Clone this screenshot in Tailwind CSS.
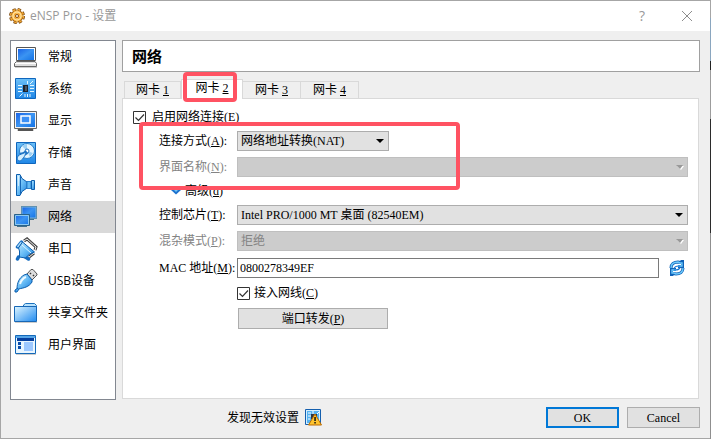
<!DOCTYPE html>
<html lang="zh-CN">
<head>
<meta charset="utf-8">
<title>eNSP Pro - 设置</title>
<script src="https://cdn.jsdelivr.net/npm/@tailwindcss/browser@4"></script>
</head>
<body class="h-screen flex overflow-hidden bg-[#efefef] text-xs text-black font-['Liberation_Serif','Noto_Sans_CJK_SC',serif]">
<svg class="absolute size-0" aria-hidden="true">
  <defs>
    <linearGradient id="blue" x1="0" y1="0" x2="1" y2="1"><stop offset="0" stop-color="#1a63e6"/><stop offset=".5" stop-color="#3b94f2"/><stop offset="1" stop-color="#1473e6"/></linearGradient>
    <linearGradient id="sky" x1="0" y1="0" x2="1" y2="1"><stop offset="0" stop-color="#c5ebff"/><stop offset=".5" stop-color="#69bdf6"/><stop offset="1" stop-color="#1c80dc"/></linearGradient>
    <linearGradient id="chip-bg" x1="0" y1="0" x2="0" y2="1"><stop offset="0" stop-color="#6cc0f8"/><stop offset="1" stop-color="#1f86e6"/></linearGradient>
    <linearGradient id="folder" x1="0" y1="0" x2="1" y2="1"><stop offset="0" stop-color="#dff6ff"/><stop offset="1" stop-color="#1f8af0"/></linearGradient>
  </defs>
</svg>
<div class="flex-1 min-w-0 flex flex-col border-l border-t border-b border-[#a6a6a6]">
  <header class="h-[30px] shrink-0 bg-white flex items-center pl-2 text-[#999] font-['Open_Sans','Noto_Sans_CJK_SC',sans-serif]">
    <svg class="size-4" viewBox="0 0 16 16"><circle cx="8" cy="8" r="6.500" fill="none" stroke="#7a4a12" stroke-width="3" stroke-dasharray="3.100 2"/><circle cx="8" cy="8" r="6" fill="#f3a632" stroke="#8a5314"/><circle cx="8" cy="8" r="6.500" fill="none" stroke="#f0a634" stroke-width="1.500" stroke-dasharray="2.600 2.500"/><circle cx="8" cy="8" r="4" fill="none" stroke="#ffe3a0" stroke-width="1.500"/><path d="M8 2v4m6 2h-4m-2 6v-4M2 8h4" stroke="#ffd27a"/><circle cx="8" cy="8" r="1.500" fill="#fff" stroke="#8a4c0c"/></svg>
    <h1 class="ml-[5px] text-xs flex-1">eNSP Pro - 设置</h1>
    <button aria-label="帮助" class="w-5 text-sm">?</button>
    <button aria-label="关闭" class="ml-[29px] mr-[17px]"><svg class="size-3" viewBox="0 0 12 12"><path d="m1 1 10 10M11 1 1 11" stroke="#8d8d8d"/></svg></button>
  </header>
  <div class="flex-1 min-h-0 flex flex-col pl-[9px] pr-2.5 pt-[9px] pb-2.5">
    <div class="flex-1 min-h-0 flex gap-1.5">
      <nav class="w-[106px] shrink-0 bg-white border border-[#828790] font-['Open_Sans','Noto_Sans_CJK_SC',sans-serif] [&_a]:flex [&_a]:items-center [&_a]:h-8 [&_a]:pl-[3px] [&_a]:gap-2.5 [&_svg]:size-6">
        <a href="#general"><svg viewBox="0 0 24 24"><path d="M2.500 2.500h19v13h-19Z" fill="#fff" stroke="#555"/><path d="M4 4h16v11H4Z" fill="url(#blue)"/><path d="M2.500 16.500h18.500l1.500 2v3H.500v-3Z" fill="#ddd" stroke="#666"/><path d="M1 18.500h21" stroke="#fff"/><path d="M1 22.500h22" stroke="#ccc"/></svg>常规</a>
        <a href="#system"><svg viewBox="0 0 24 24"><path d="M1.500 1.500h20v20h-20Z" fill="url(#chip-bg)" stroke="#0f66bd"/><path d="M4 8.500h4m-4 3h4m-4 3h4m8-6h4m-4 3h4m-4 3h4M13.500 4v3M5.500 19.500l3-3m2.500.5v3m2.500-3v3m2.500-3v3m0-13 3-3" stroke="#e6f8ff" fill="none"/><path d="M9 8h5v7H9Z" fill="#1c2430"/><path d="M11 9h2v5h-2Z" fill="#4b5563"/></svg>系统</a>
        <a href="#display"><svg viewBox="0 0 24 24"><path d="M.5 2.500h22v17H.500Z" fill="#f4f4f4" stroke="#666"/><path d="M2 4h19v14H2Z" fill="url(#blue)"/><path d="M7 7h9v7H7Z" fill="#3b8ff5" stroke="#fff" stroke-width="1.500"/><path d="M4 20.500h15v1H4Z" fill="#ddd" stroke="#555"/></svg>显示</a>
        <a href="#storage"><svg viewBox="0 0 24 24"><path d="M2.500 1.500h19v21h-19Z" fill="url(#chip-bg)" stroke="#0f66bd"/><circle cx="13" cy="10" r="7.500" fill="#e4f5ff" stroke="#2a81cd"/><path d="M13 10 8 5a7 7 0 0 1 5-2Zm0 0 3 6 3-4Z" fill="#9bd0f5"/><circle cx="13" cy="10" r="2" fill="#fff" stroke="#1e73c4"/><path d="m6 14 4-1 3-2" fill="none" stroke="#1e73c4" stroke-width="4"/><path d="M4 15c2-2 5-2 8-4-1 5-4 8-6 9-3 0-3-3-2-5Z" fill="#d3eeff" stroke="#1e73c4"/></svg>存储</a>
        <a href="#audio"><svg viewBox="0 0 24 24"><path d="M2.500 1.500H6l2 4 5 3.500v6l-5 3.500-2 4H2.500Z" fill="url(#sky)" stroke="#0d5fae"/><path d="M6.500 3v18" stroke="#1566b5"/><path d="M4.500 3v10" stroke="#fff" opacity=".6"/><path d="M13 8.500h4v7h-4Z" fill="#67bbf3" stroke="#2a81cd"/><path d="M17.500 7.500h3v9h-3Z" fill="url(#sky)" stroke="#0d5fae"/></svg>声音</a>
        <a href="#network" class="bg-[#d9d9d9]" aria-current="page"><svg viewBox="0 0 24 24"><path d="M7.500 1.500h15v12h-15Z" fill="#e8f3fa" stroke="#41718f"/><path d="M8 2h14v11H8Z" fill="url(#blue)" stroke="#7fb4d8"/><path d="M11 14.500h9" stroke="#41718f"/><path d="M.500 9.500h15v11H.500Z" fill="url(#blue)" stroke="#2a6288"/><path d="M1.500 10.500h13v9h-13Z" fill="none" stroke="#8cc9f2"/><path d="M3 21.500h10" stroke="#41718f"/></svg>网络</a>
        <a href="#serial"><svg viewBox="0 0 24 24"><path d="m10 4 3-2 9 8-1 3M15 20l5-4" fill="none" stroke="#444" stroke-width="3"/><path d="m10 4 3-2 9 8-1 3M15 20l5-4" fill="none" stroke="#eee" stroke-width="1"/><path d="m3.500 10 4-5m-3 15-1 2m8-2 3 2" stroke="#176cc0" stroke-width="3.500" stroke-linecap="round"/><path d="m3.500 10 4-5" stroke="#a9dcfb" stroke-width="1.500"/><path d="m8.500 5 12 10-5 2-4 4-6-1v-6l-1-3Z" fill="url(#sky)" stroke="#0d5fae"/><path d="m8 8 9 8" stroke="#def5ff"/></svg>串口</a>
        <a href="#usb"><svg viewBox="0 0 24 24"><path d="m13 5 4-4.500h2L23 5v1l-5 5Z" fill="#ddd" stroke="#555"/><path d="m16 4 1 1m2 1 1 1" stroke="#333" stroke-width="1.500"/><path d="M3 20c0-6 2-11 7-14l3-1 5 6v2c-3 5-8 6-14 7Z" fill="url(#sky)" stroke="#0d5fae"/><path d="m4 19-3 2v2h2l2-3" fill="#4ba7ee" stroke="#0d5fae"/><path d="M6 15c1-3 3-6 6-7" fill="none" stroke="#effaff" stroke-width="2"/></svg>USB设备</a>
        <a href="#shared"><svg viewBox="0 0 24 24"><path d="M9.500 5.500V4l2-1.500h9l2 2v15" fill="#b8e2fc" stroke="#1c72be"/><path d="M.500 5.500h22v15H.500Z" fill="url(#folder)" stroke="#1767b6"/><path d="M1 21.500h22" stroke="#ccc"/></svg>共享文件夹</a>
        <a href="#ui"><svg viewBox="0 0 24 24"><path d="M1.500 2.500h20v18h-20Z" fill="#e9f6ff" stroke="#1469b9"/><path d="M2 3h19v2H2Z" fill="#55a5e8"/><path d="M3 5h17v3H3Z" fill="#063f9e"/><path d="M4 9h3v3H4Zm0 4h3v3H4Z" fill="#0a4dab"/><path d="M10 9h9v9h-9Z" fill="#9dc8ff"/><path d="M2 21.500h20" stroke="#ccc"/></svg>用户界面</a>
      </nav>
      <main class="flex-1 min-w-0 flex flex-col">
        <h2 class="h-8 shrink-0 bg-white border border-[#a0a0a0] flex items-center pl-[9px] text-[15px] font-bold font-['Noto_Sans_CJK_SC',sans-serif]">网络</h2>
        <div role="tablist" class="h-[26px] shrink-0 flex items-end pl-0.5">
          <button role="tab" class="h-[17px] w-[57px] border border-b-0 border-[#d9d9d9] leading-4">网卡 <u>1</u></button>
          <button role="tab" aria-selected="true" class="relative z-10 h-5 w-[62px] -mb-px bg-white border border-b-0 border-[#d9d9d9] pb-1 leading-4">网卡 <u>2</u><span class="absolute -top-2 left-px w-[54px] h-[30px] border-4 border-[#ff5262] rounded"></span></button>
          <button role="tab" class="h-[17px] w-[58px] border border-b-0 border-l-0 border-[#d9d9d9] leading-4">网卡 <u>3</u></button>
          <button role="tab" class="h-[17px] w-[58px] border border-b-0 border-l-0 border-[#d9d9d9] leading-4">网卡 <u>4</u></button>
        </div>
        <form class="relative flex-1 min-h-0 mr-px mb-px bg-white border border-[#d9d9d9] pl-2.5 pr-2.5 pt-2.5">
          <label class="flex items-center gap-1.5 h-4"><input type="checkbox" checked class="sr-only"><svg class="size-[13px]" viewBox="0 0 13 13"><path d="M.5.5h12v12H.500Z" fill="#fff" stroke="#333"/><path d="m2.500 6.500 3 3L11 3.500" fill="none" stroke="#333" stroke-width="1.200"/></svg><span>启用网络连接(<u>E</u>)</span></label>
          <div class="mt-1.5 pl-[26px] grid grid-cols-[78px_minmax(0,1fr)] gap-y-1.5 items-center">
            <label for="mode">连接方式(<u>A</u>):</label>
            <div class="relative w-[152px]"><select id="mode" class="block appearance-none w-full h-5 bg-[#e1e1e1] border border-[#adadad] pl-[3px]"><option>网络地址转换(NAT)</option></select><svg class="absolute right-[5px] top-2 w-2 h-1 pointer-events-none" viewBox="0 0 8 4"><path d="M0 0h8L4 4Z"/></svg></div>
            <label for="iface" class="text-[#838383]">界面名称(<u>N</u>):</label>
            <div class="relative"><select id="iface" disabled class="block appearance-none w-full h-5 bg-[#ccc] border border-[#bfbfbf] pl-[3px]"><option></option></select><svg class="absolute right-1 top-2 w-2 h-[5px] pointer-events-none" viewBox="0 0 8 5"><path d="M1 1h7L5 5Z" fill="#fff"/><path d="M0 0h7L4 4Z" fill="#999"/></svg></div>
            <button type="button" class="col-span-2 h-4 flex items-center gap-1 pl-3 text-left"><svg class="w-2.5 h-2" viewBox="0 0 10 8"><path d="M0 1h10v2L5 7.500 0 3Z" fill="#1d72cf"/><path d="M3 3h4L5 5Z" fill="#72c5f5"/></svg><span>高级(<u>d</u>)</span></button>
            <label for="chip">控制芯片(<u>T</u>):</label>
            <div class="relative"><select id="chip" class="block appearance-none w-full h-5 bg-[#e1e1e1] border border-[#adadad] pl-[3px]"><option>Intel PRO/1000 MT 桌面 (82540EM)</option></select><svg class="absolute right-[5px] top-2 w-2 h-1 pointer-events-none" viewBox="0 0 8 4"><path d="M0 0h8L4 4Z"/></svg></div>
            <label for="promisc" class="text-[#838383]">混杂模式(<u>P</u>):</label>
            <div class="relative"><select id="promisc" disabled class="block appearance-none w-full h-5 bg-[#ccc] border border-[#bfbfbf] pl-[3px] text-[#838383] opacity-100"><option>拒绝</option></select><svg class="absolute right-1 top-2 w-2 h-[5px] pointer-events-none" viewBox="0 0 8 5"><path d="M1 1h7L5 5Z" fill="#fff"/><path d="M0 0h7L4 4Z" fill="#999"/></svg></div>
            <label for="mac">MAC 地址(<u>M</u>):</label>
            <div class="flex items-center gap-2.5 pr-[3px]"><input id="mac" value="0800278349EF" class="flex-1 min-w-0 h-5 mt-px bg-white border border-[#7a7a7a] pl-0.5"><button type="button" aria-label="刷新"><svg class="block size-4" viewBox="0 0 16 16"><path d="M2 8c0-4 3-6 7-6l2 .5L13.500 1v5.500H9M14 8c0 4-3 6-7 6l-2-.5L2.500 15V9.500H7" fill="none" stroke="#0f62b8" stroke-width="3"/><path d="M2 8c0-4 3-6 7-6l2 1h2v3H9M14 8c0 4-3 6-7 6l-2-1H3v-3h4" fill="none" stroke="#6cc8fa" stroke-width="1.400"/><path d="M5 8.500C6 5.500 8 6 11 6m0 1.500c-1 3-3 2.500-6 2.500" fill="none" stroke="#1b78d4" stroke-width="1.200"/></svg></button></div>
            <label class="col-start-2 flex items-center gap-1 h-[18px]"><input type="checkbox" checked class="sr-only"><svg class="size-[13px]" viewBox="0 0 13 13"><path d="M.5.5h12v12H.500Z" fill="#fff" stroke="#333"/><path d="m2.500 6.500 3 3L11 3.500" fill="none" stroke="#333" stroke-width="1.200"/></svg><span>接入网线(<u>C</u>)</span></label>
            <button type="button" class="col-start-2 ml-px w-[150px] h-[21px] bg-[#e1e1e1] border border-[#adadad] leading-4">端口转发(<u>P</u>)</button>
          </div>
          <span class="absolute left-4 right-[238px] top-[23px] h-[68px] border-4 border-[#ff5262] rounded pointer-events-none"></span>
        </form>
      </main>
    </div>
    <footer class="mt-[7px] flex items-center gap-2">
      <p class="flex-1 flex items-center gap-1.5 pl-[217px]">发现无效设置
        <svg class="size-[17px]" viewBox="0 0 17 17"><path d="M.5.500h15v15H.500Z" fill="#d5efff" stroke="#155fae"/><path d="M2 2h12v12H2Z" fill="#55b2f1"/><path d="M3 4h3M3 7h3m-3 3h2M8 2v3m4 0 2-2" stroke="#fff"/><path d="M6 5h6v5H6Z" fill="#303846"/><path d="m10 5 6.500 11H3.500Z" fill="#ffc42e" stroke="#bb6b00"/><path d="M9.300 8h1.500v4H9.300Zm0 5h1.500v1.500H9.300Z" fill="#111"/></svg></p>
      <button class="w-[73px] h-[21px] bg-[#e1e1e1] border-2 border-[#0078d7] leading-4">OK</button>
      <button class="w-[73px] h-[21px] bg-[#e1e1e1] border border-[#adadad] leading-4">Cancel</button>
    </footer>
  </div>
</div>
<div class="w-px shrink-0 bg-linear-[180deg,#a6a6a6_0_4%,#8aa6bf_4%_14%,#222_14%_16%,#9c9c9c_16%_27%,#2b2b2b_27%_53%,#8f8f8f_53%]"></div>
</body>
</html>
